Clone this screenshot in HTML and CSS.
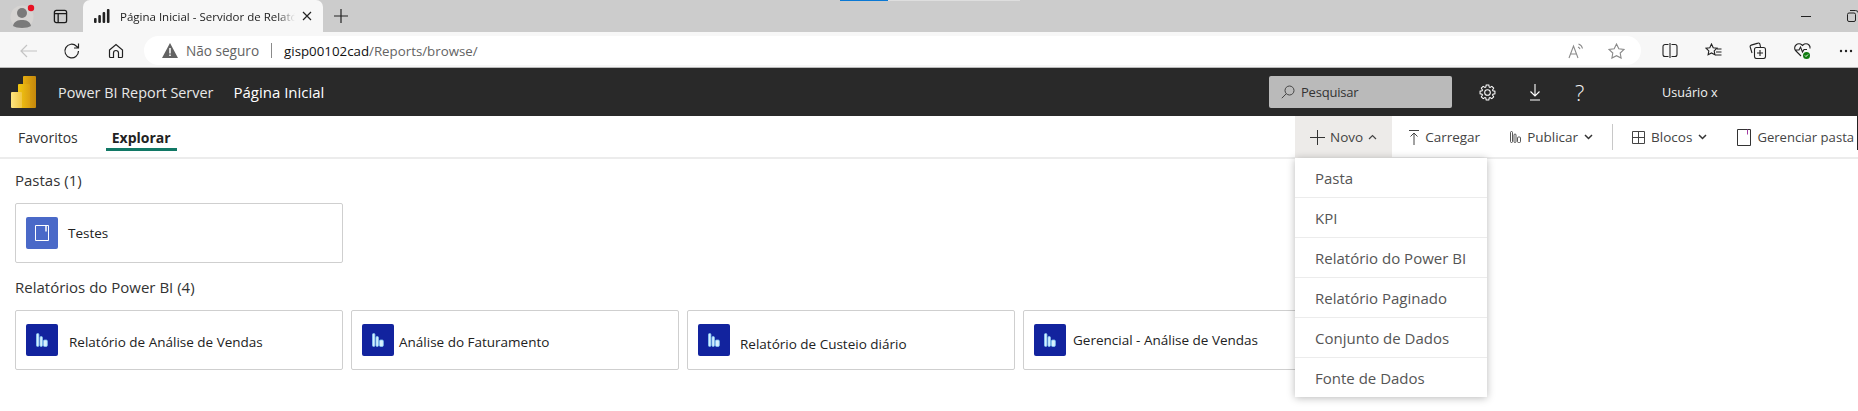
FILE: index.html
```html
<!DOCTYPE html>
<html lang="pt">
<head>
<meta charset="utf-8">
<title>Página Inicial - Servidor de Relatórios</title>
<link rel="stylesheet" href="styles.css">
</head>
<body>
<div class="tabstrip">
  <div class="profile">
    <svg width="36" height="32" viewBox="0 0 36 32"><circle cx="22" cy="17" r="11.5" fill="#d6d4d2"/><circle cx="22" cy="13" r="5" fill="#7a7a7a"/><path d="M13 26c1-5 5-6 9-6s8 1 9 6c-2 1-5 2-9 2s-7-1-9-2z" fill="#7a7a7a"/><circle cx="31" cy="8" r="3.2" fill="#e81123"/></svg>
  </div>
  <div class="strip-btn">
    <svg width="15" height="15" viewBox="0 0 16 16" fill="none" stroke="#1a1a1a" stroke-width="1.4"><rect x="1.5" y="1.5" width="13" height="13" rx="2"/><path d="M1.5 5h13M5.5 5v9.5"/></svg>
  </div>
  <div class="tab">
    <svg class="tab-favicon" width="16" height="14" viewBox="0 0 16 14" fill="#222"><rect x="0" y="9" width="2.6" height="5" rx="1"/><rect x="4.3" y="6" width="2.6" height="8" rx="1"/><rect x="8.6" y="3" width="2.6" height="11" rx="1"/><rect x="12.9" y="0" width="2.6" height="14" rx="1"/></svg>
    <span class="tab-title">Página Inicial - Servidor de Relatórios</span>
    <svg width="10" height="10" viewBox="0 0 10 10" stroke="#222" stroke-width="1.2"><path d="M1 1l8 8M9 1l-8 8"/></svg>
  </div>
  <svg class="newtab" width="16" height="16" viewBox="0 0 16 16" stroke="#222" stroke-width="1.2"><path d="M8 1v14M1 8h14"/></svg>
  <div class="strip-spacer"><div class="blue-flag"></div><div class="pale-flag"></div></div>
  <svg class="win-icon" width="12" height="12" viewBox="0 0 12 12" stroke="#222" fill="none"><path d="M1 6.500h10"/></svg>
  <svg class="win-restore" width="12" height="12" viewBox="0 0 12 12" stroke="#222" fill="none"><rect x=".5" y="3" width="8" height="8.500" rx="1.500"/><path d="M3 .5h5.500a3 3 0 0 1 3 3V8"/></svg>
</div>

<div class="toolbar">
  <svg class="tool tool-back" width="18" height="14" viewBox="0 0 18 14" fill="none" stroke="#c4c4c4" stroke-width="1.2"><path d="M17 7H1M7 1L1 7l6 6"/></svg>
  <svg class="tool tool-reload" width="18" height="18" viewBox="0 0 18 18" fill="none" stroke="#222" stroke-width="1.2"><path d="M15.500 9a6.800 6.800 0 1 1-2-4.800L15.500 6M15.500 1.500V6H11"/></svg>
  <svg class="tool" width="16" height="16" viewBox="0 0 16 16" fill="none" stroke="#222" stroke-width="1.2"><path d="M1.500 7L8 1.500 14.500 7v6.500a1 1 0 0 1-1 1H10.500V10a2.500 2.500 0 0 0-5 0v4.500H2.500a1 1 0 0 1-1-1z"/></svg>
  <div class="address">
    <svg width="16" height="15" viewBox="0 0 16 15"><path d="M8 0L16 15H0z" fill="#636363"/><path d="M7.200 5h1.600v5.500H7.200zM7.200 11.500h1.600v1.600H7.200z" fill="#f7f7f7"/></svg>
    <span class="not-secure">Não seguro</span>
    <span class="addr-sep"></span>
    <span class="url"><b>gisp00102cad</b>/Reports/browse/</span>
    <span class="addr-end">
      <svg width="16" height="16" viewBox="0 0 16 16" fill="none" stroke="#8a8a8a" stroke-width="1.100"><path d="M1 15L5.500 3 10 15M2.500 11h6M10.500 1c2.200.7 3.500 2.200 4 4.500M10 4c1 .4 1.700 1.100 2 2.200"/></svg>
      <svg width="17" height="16" viewBox="0 0 17 16" fill="none" stroke="#8a8a8a" stroke-width="1.100"><path d="M8.500 1l2.300 4.700 5.200.7-3.800 3.600.9 5.100-4.600-2.400-4.600 2.400.9-5.100L1 6.400l5.200-.7z"/></svg>
    </span>
  </div>
  <div class="tool-right">
    <svg width="16" height="15" viewBox="0 0 16 15" fill="none" stroke="#222" stroke-width="1.100"><path d="M6.500 1.500H3A2 2 0 0 0 1 3.500v8a2 2 0 0 0 2 2h3.500M9.500 1.500H13a2 2 0 0 1 2 2v8a2 2 0 0 1-2 2H9.500M8 0v15"/></svg>
    <svg width="17" height="16" viewBox="0 0 17 16" fill="none" stroke="#222" stroke-width="1.100"><path d="M6.500 1l1.700 3.700 3.800.5-2.800 2.700.7 3.900-3.400-1.900-3.400 1.900.7-3.900L1 5.200l3.800-.5zM12 6h4.500M11 9h5.500M10 12h6.500"/></svg>
    <svg width="18" height="17" viewBox="0 0 18 17" fill="none" stroke="#222" stroke-width="1.100"><path d="M3 11L1.200 5a1.500 1.500 0 0 1 1-1.900L9 1.100a1.500 1.500 0 0 1 1.900 1L11.500 5"/><rect x="5.500" y="5.500" width="11" height="11" rx="2"/><path d="M11 8v6M8 11h6"/></svg>
    <svg width="18" height="18" viewBox="0 0 18 18" fill="none"><path d="M7 14L2 9a4 4 0 0 1 0-6 4.200 4.200 0 0 1 6 0l.5.500.500-.5a4.200 4.200 0 0 1 6 0 4 4 0 0 1 1 3.500M1.500 8H5l1.500-3 2 5 1.500-2.500h3" stroke="#222" stroke-width="1.100"/><circle cx="12.500" cy="13.500" r="3.500" fill="#107c10"/><path d="M11 13.500l1 1 2-2" stroke="#fff"/></svg>
    <svg width="14" height="4" viewBox="0 0 14 4" fill="#222"><circle cx="2" cy="2" r="1.200"/><circle cx="7" cy="2" r="1.200"/><circle cx="12" cy="2" r="1.200"/></svg>
  </div>
</div>

<header class="appbar">
  <svg class="logo" width="25" height="32" viewBox="0 0 25 32">
    <defs>
      <linearGradient id="pb1" x1="0" y1="0" x2="1" y2="0"><stop offset="0" stop-color="#e6ad10"/><stop offset="1" stop-color="#c4880c"/></linearGradient>
      <linearGradient id="pb2" x1="0" y1="0" x2="1" y2="0"><stop offset="0" stop-color="#f2c811"/><stop offset="1" stop-color="#dba012"/></linearGradient>
      <linearGradient id="pb3" x1="0" y1="0" x2="1" y2="0"><stop offset="0" stop-color="#ffe680"/><stop offset="1" stop-color="#f0c644"/></linearGradient>
    </defs>
    <rect x="12" y="0" width="13" height="32" rx="1" fill="url(#pb1)"/><rect x="7" y="8" width="12" height="24" rx="1" fill="url(#pb2)"/><rect x="0" y="16" width="11" height="16" rx="1" fill="url(#pb3)"/>
  </svg>
  <span class="brand">Power BI Report Server</span>
  <span class="crumb">Página Inicial</span>
  <div class="search">
    <svg width="14" height="14" viewBox="0 0 14 14" fill="none" stroke="#444"><circle cx="8.500" cy="5.500" r="4.500"/><path d="M5.300 8.700L.8 13.200"/></svg>
    <span>Pesquisar</span>
  </div>
  <svg class="app-gear" width="17" height="17" viewBox="0 0 18 18" fill="none" stroke="#fff" stroke-width="1.100"><path d="M7.610 1.120H10.390L10.850 3.290L11.720 3.650L13.590 2.450L15.550 4.410L14.350 6.280L14.710 7.150L16.880 7.610V10.390L14.710 10.850L14.350 11.720L15.550 13.590L13.590 15.550L11.720 14.350L10.850 14.710L10.390 16.880H7.610L7.150 14.710L6.280 14.350L4.410 15.550L2.450 13.590L3.650 11.720L3.290 10.850L1.120 10.390V7.610L3.290 7.150L3.650 6.280L2.450 4.410L4.410 2.450L6.280 3.650L7.150 3.290Z"/><circle cx="9" cy="9" r="3"/></svg>
  <svg class="app-down" width="12" height="17" viewBox="0 0 12 17" fill="none" stroke="#fff" stroke-width="1.100"><path d="M6 0v12M1.500 7.500L6 12l4.500-4.500M1 16h10"/></svg>
  <span class="app-help">?</span>
  <span class="user">Usuário x</span>
</header>

<nav class="subnav">
  <a class="tab-link">Favoritos</a>
  <a class="tab-link tab-active">Explorar</a>
  <div class="actions">
    <div class="action action-open">
      <svg width="15" height="15" viewBox="0 0 15 15" stroke="#333" stroke-width="1"><path d="M7.500 0v15M0 7.500h15"/></svg>
      <span>Novo</span>
      <svg width="9" height="6" viewBox="0 0 9 6" fill="none" stroke="#444" stroke-width="1.200"><path d="M1 5l3.500-3.500L8 5"/></svg>
    </div>
    <div class="action action-upload">
      <svg width="10" height="15" viewBox="0 0 10 15" fill="none" stroke="#444"><path d="M0 .5h10M5 15V3M1.500 6.500L5 3l3.500 3.500"/></svg>
      <span>Carregar</span>
    </div>
    <div class="action">
      <svg width="11" height="12" viewBox="0 0 11 12" fill="none" stroke="#444" stroke-width=".9"><rect x=".5" y=".5" width="2" height="11" rx="1"/><rect x="4" y="3" width="2" height="8.500" rx="1"/><rect x="7.500" y="6" width="3" height="5.500" rx="1"/></svg>
      <span>Publicar</span>
      <svg width="9" height="6" viewBox="0 0 9 6" fill="none" stroke="#333" stroke-width="1.500"><path d="M1 1l3.500 3.500L8 1"/></svg>
    </div>
    <span class="action-sep"></span>
    <div class="action">
      <svg width="13" height="13" viewBox="0 0 13 13" fill="none" stroke="#444"><path d="M.5.5h12v12H.5zM6.500.5v12M.5 6.500h12"/></svg>
      <span>Blocos</span>
      <svg width="9" height="6" viewBox="0 0 9 6" fill="none" stroke="#333" stroke-width="1.500"><path d="M1 1l3.500 3.500L8 1"/></svg>
    </div>
    <div class="action action-manage">
      <svg width="14" height="17" viewBox="0 0 14 17" fill="none" stroke="#333"><path d="M.5.500h13v16H.5z"/><path d="M10.500.5v5" stroke="#a33ba3"/></svg>
      <span>Gerenciar pasta</span>
    </div>
    <span class="edge-mark"></span>
  </div>
  <div class="menu">
    <div class="menu-item">Pasta</div>
    <div class="menu-item">KPI</div>
    <div class="menu-item">Relatório do Power BI</div>
    <div class="menu-item">Relatório Paginado</div>
    <div class="menu-item">Conjunto de Dados</div>
    <div class="menu-item">Fonte de Dados</div>
  </div>
</nav>

<main class="content">
  <h2 class="section-title">Pastas (1)</h2>
  <div class="cards">
    <div class="card">
      <div class="tile tile-folder"><svg width="14" height="16" viewBox="0 0 14 16" fill="none" stroke="#fff"><path d="M.5.500h13v15H.5z"/><path d="M11 .5v6" stroke-width="1.500"/></svg></div>
      <span class="card-name">Testes</span>
    </div>
  </div>
  <h2 class="section-title section-title-2">Relatórios do Power BI (4)</h2>
  <div class="cards">
    <div class="card">
      <div class="tile tile-report"><svg width="12" height="14" viewBox="0 0 12 14" fill="#d8f0fd" stroke="#86cdf5" stroke-width=".8"><rect x=".5" y=".5" width="2.400" height="13" rx="1.100"/><rect x="4" y="3.500" width="2.400" height="10" rx="1.100"/><rect x="7.500" y="7" width="3.800" height="6.500" rx="1.100"/></svg></div>
      <span class="card-name name-first">Relatório de Análise de Vendas</span>
    </div>
    <div class="card">
      <div class="tile tile-report"><svg width="12" height="14" viewBox="0 0 12 14" fill="#d8f0fd" stroke="#86cdf5" stroke-width=".8"><rect x=".5" y=".5" width="2.400" height="13" rx="1.100"/><rect x="4" y="3.500" width="2.400" height="10" rx="1.100"/><rect x="7.500" y="7" width="3.800" height="6.500" rx="1.100"/></svg></div>
      <span class="card-name name-second">Análise do Faturamento</span>
    </div>
    <div class="card">
      <div class="tile tile-report"><svg width="12" height="14" viewBox="0 0 12 14" fill="#d8f0fd" stroke="#86cdf5" stroke-width=".8"><rect x=".5" y=".5" width="2.400" height="13" rx="1.100"/><rect x="4" y="3.500" width="2.400" height="10" rx="1.100"/><rect x="7.500" y="7" width="3.800" height="6.500" rx="1.100"/></svg></div>
      <span class="card-name name-third">Relatório de Custeio diário</span>
    </div>
    <div class="card">
      <div class="tile tile-report"><svg width="12" height="14" viewBox="0 0 12 14" fill="#d8f0fd" stroke="#86cdf5" stroke-width=".8"><rect x=".5" y=".5" width="2.400" height="13" rx="1.100"/><rect x="4" y="3.500" width="2.400" height="10" rx="1.100"/><rect x="7.500" y="7" width="3.800" height="6.500" rx="1.100"/></svg></div>
      <span class="card-name name-fourth">Gerencial - Análise de Vendas</span>
    </div>
  </div>
</main>
</body>
</html>
```
FILE: styles.css
```css
* { box-sizing: border-box; }
html, body { margin: 0; padding: 0; }
body {
  width: 1858px;
  height: 411px;
  overflow: hidden;
  background: #fff;
  font-family: "Open Sans", "Noto Sans", sans-serif;
  color: #333;
}
svg { display: block; flex: none; }

.tabstrip {
  height: 32px;
  background: #cccccc;
  display: flex;
  align-items: center;
}
.profile { width: 46px; height: 32px; }
.strip-btn { width: 37px; padding-left: 7px; }
.tab {
  width: 240px;
  height: 32px;
  background: #f7f7f7;
  border-radius: 7px 7px 0 0;
  display: flex;
  align-items: center;
  padding: 0 11px;
}
.tab-favicon { margin-right: 10px; }
.tab-title {
  flex: 1;
  margin-right: 7px;
  font-size: 11.500px;
  color: #222;
  white-space: nowrap;
  overflow: hidden;
  -webkit-mask-image: linear-gradient(to right, #000 90%, transparent);
  mask-image: linear-gradient(to right, #000 90%, transparent);
}
.newtab { margin-left: 10px; }
.strip-spacer { flex: 1; height: 32px; display: flex; align-items: flex-start; }
.blue-flag {
  width: 48px;
  height: 1px;
  margin-left: 491px;
  background: #0a78d4;
}
.pale-flag {
  width: 132px;
  height: 1px;
  background: #dedede;
}
.win-icon { margin-right: 35px; }
.win-restore { margin-right: -1px; }

.toolbar {
  height: 36px;
  padding-top: 2px;
  background: #f7f7f7;
  border-bottom: 1px solid #b9b9b9;
  display: flex;
  align-items: center;
}
.tool-back { margin-left: 20px; margin-right: 25px; }
.tool-reload { margin-right: 27px; }
.address {
  width: 1497px;
  height: 29px;
  margin-left: 20px;
  background: #fff;
  border-radius: 15px;
  display: flex;
  align-items: center;
  padding-left: 18px;
  font-size: 13.600px;
}
.not-secure { color: #636363; margin-left: 8px; }
.addr-sep { width: 1px; height: 15px; background: #8a8a8a; margin: 0 12px; }
.url { color: #636363; font-size: 13.300px; }
.url b { font-weight: 400; color: #111; }
.addr-end { margin-left: auto; display: flex; align-items: center; gap: 24px; padding-right: 16px; }
.tool-right { flex: 1; display: flex; align-items: center; gap: 27px; padding-left: 21px; }

.appbar {
  height: 48px;
  background: #292929;
  display: flex;
  align-items: center;
  color: #fff;
}
.logo { margin-left: 11px; }
.brand { margin-left: 22px; font-size: 14.400px; color: #e8e8e8; }
.crumb { margin-left: 20px; font-size: 15px; color: #fff; }
.search {
  width: 183px;
  height: 32px;
  margin-left: auto;
  background: #bababa;
  border-radius: 2px;
  display: flex;
  align-items: center;
  padding-left: 12px;
  gap: 6px;
  font-size: 13px;
  letter-spacing: -.2px;
  color: #333;
}
.app-gear { margin-left: 27px; }
.app-down { margin-left: 33px; }
.app-help { margin-left: 34px; width: 11px; font-size: 22px; font-weight: 300; color: #f2f2f2; }
.user { margin-left: 76px; width: 196px; font-size: 12.600px; color: #f2f2f2; }

.subnav {
  height: 43px;
  border-bottom: 2px solid #ececec;
  display: flex;
  position: relative;
  padding-left: 18px;
}
.tab-link {
  font-size: 14px;
  color: #333;
  padding-top: 12px;
}
.tab-active {
  margin-left: 28px;
  font-weight: 700;
  color: #222;
  height: 35px;
  padding: 12px 6px 0;
  border-bottom: 3px solid #117865;
}
.actions {
  width: 563px;
  margin-left: auto;
  display: flex;
  align-items: flex-start;
  font-size: 13.500px;
  color: #444;
}
.action {
  display: flex;
  align-items: center;
  gap: 6px;
  padding: 0 15px;
  height: 42px;
  white-space: nowrap;
}
.action-open { background: #edebe9; gap: 5px; }
.action-upload { padding-left: 17px; }
.action-manage { padding-right: 0; font-size: 13.100px; }
.action-sep { width: 1px; height: 26px; margin: 8px 4px 0; flex: none; background: #c8c8c8; }
.edge-mark { width: 1px; height: 34px; margin-left: auto; flex: none; background: #222; }
.menu {
  position: absolute;
  left: 1295px;
  top: 42px;
  width: 192px;
  background: #fff;
  box-shadow: 0 1px 8px rgba(0, 0, 0, .28);
  z-index: 5;
}
.menu-item {
  height: 40px;
  padding: 0 10px 0 20px;
  display: flex;
  align-items: center;
  font-size: 15px;
  color: #555;
  white-space: nowrap;
  border-top: 1px solid #ececec;
}
.menu-item:first-child { border-top: 0; height: 39px; }

.content { padding: 0 15px; }
.section-title {
  margin: 0;
  padding-top: 11px;
  height: 44px;
  font-size: 15px;
  font-weight: 400;
  color: #333;
}
.section-title-2 { height: 47px; padding-top: 14px; }
.cards {
  display: grid;
  grid-template-columns: repeat(4, 328px);
  column-gap: 8px;
}
.card {
  height: 60px;
  border: 1px solid #cfcfcf;
  border-radius: 2px;
  display: flex;
  align-items: center;
  padding-left: 10px;
}
.tile {
  width: 32px;
  height: 32px;
  border-radius: 2px;
  display: flex;
  align-items: center;
  justify-content: center;
}
.tile-folder { background: #4a69c8; }
.tile-report { background: #12239e; }
.card-name { margin-left: 10px; font-size: 13.500px; color: #222; }
.name-first { margin: 3px 0 0 11px; }
.name-second { margin: 3px 0 0 5px; }
.name-third { margin: 7px 0 0 10px; }
.name-fourth { margin: 0 0 0 7px; }
```
